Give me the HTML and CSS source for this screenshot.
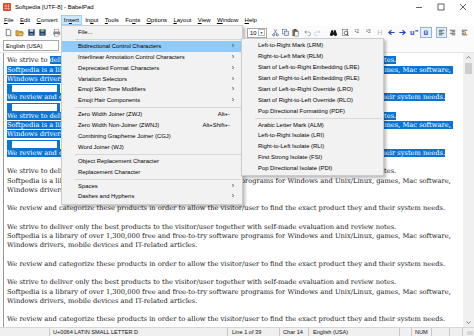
FILE: index.html
```html
<!DOCTYPE html>
<html lang="en">
<head>
  <meta charset="UTF-8" />
  <title>Softpedia [UTF-8] - BabelPad</title>
  <link rel="stylesheet" href="styles.css">
</head>
<body>
<div class="window">

  <div class="titlebar">
    <svg class="app-icon" viewBox="0 0 8 8"><rect x="0" y="0" width="8" height="8" rx="1" fill="#d9482a"/><path d="M1 3h6M1 5.5h6M3 1v6M5.5 1v6" stroke="#f6c4b4" stroke-width="0.6"/></svg>
    <span class="title">Softpedia [UTF-8] - BabelPad</span>
    <div class="win-controls">
      <svg viewBox="0 0 22 14"><path d="M8 7.5h6" stroke="#222" stroke-width="0.7"/></svg>
      <svg viewBox="0 0 22 14"><rect x="8" y="4" width="6" height="6" fill="none" stroke="#222" stroke-width="0.7"/></svg>
      <svg viewBox="0 0 22 14"><path d="M8 4l6 6M14 4l-6 6" stroke="#222" stroke-width="0.7"/></svg>
    </div>
  </div>

  <div class="menubar">
    <span class="menu-item"><u>F</u>ile</span>
    <span class="menu-item"><u>E</u>dit</span>
    <span class="menu-item"><u>C</u>onvert</span>
    <span class="menu-item open">In<u>s</u>ert</span>
    <span class="menu-item">In<u>p</u>ut</span>
    <span class="menu-item"><u>T</u>ools</span>
    <span class="menu-item">Fo<u>n</u>ts</span>
    <span class="menu-item"><u>O</u>ptions</span>
    <span class="menu-item"><u>L</u>ayout</span>
    <span class="menu-item"><u>V</u>iew</span>
    <span class="menu-item"><u>W</u>indow</span>
    <span class="menu-item"><u>H</u>elp</span>
  </div>

  <div class="toolbar">
    <div class="tb-group">
      <span class="tb-btn"><svg viewBox="0 0 10 10"><path d="M2.5 1.5h3.5l1.5 1.5v5.5h-5z" fill="#fff" stroke="#333" stroke-width="0.7"/></svg></span>
      <span class="tb-btn"><svg viewBox="0 0 10 10"><path d="M1 3h3l1 1h3.5v4.5H1z" fill="#e3b341" stroke="#7a5a12" stroke-width="0.6"/><path d="M2.5 8.5l1.5-3h5.5l-1.5 3z" fill="#f5d271" stroke="#7a5a12" stroke-width="0.5"/></svg></span>
      <span class="tb-btn"><svg viewBox="0 0 10 10"><rect x="1.5" y="1.5" width="7" height="7" fill="#1d3866"/><rect x="3" y="1.5" width="4" height="2.6" fill="#dfe6ee"/><rect x="3" y="5.6" width="4" height="2.9" fill="#6b7f9e"/></svg></span>
      <span class="tb-btn"><svg viewBox="0 0 10 10"><rect x="1.5" y="1.5" width="7" height="7" fill="#22406e"/><rect x="3" y="1.5" width="4" height="2.6" fill="#8fc26a"/><rect x="3" y="5.6" width="4" height="2.9" fill="#5d7390"/></svg></span>
      <span class="tb-sep"></span>
      <span class="tb-btn"><svg viewBox="0 0 10 10"><rect x="3" y="1.5" width="4.5" height="3" fill="#fff" stroke="#666" stroke-width="0.5"/><rect x="1.5" y="4" width="7.5" height="3.5" fill="#8a8a8a"/><rect x="3" y="6.5" width="4.5" height="2.5" fill="#fff" stroke="#666" stroke-width="0.5"/></svg></span>
    </div>
    <div class="tb-hidden"></div>
    <div class="tb-group">
      <div class="combo size-combo"><span>10</span><span class="combo-arrow"><svg viewBox="0 0 6 8"><path d="M1.5 3.2h3L3 5z" fill="#222"/></svg></span></div>
      <span class="tb-btn narrow"><svg viewBox="0 0 10 10"><path d="M3.5 6.5L6.5 1.5M6.5 6.5L3.5 1.5" stroke="#4a5a70" stroke-width="0.7"/><circle cx="3" cy="7.6" r="1.2" fill="none" stroke="#1f3c78" stroke-width="0.7"/><circle cx="7" cy="7.6" r="1.2" fill="none" stroke="#1f3c78" stroke-width="0.7"/></svg></span>
      <span class="tb-btn narrow"><svg viewBox="0 0 10 10"><rect x="1.5" y="1.5" width="4.5" height="5" fill="#fff" stroke="#3a5a8a" stroke-width="0.6"/><rect x="4" y="3.5" width="4.5" height="5" fill="#dbe6f3" stroke="#3a5a8a" stroke-width="0.6"/></svg></span>
      <span class="tb-btn narrow"><svg viewBox="0 0 10 10"><rect x="1.5" y="2" width="6" height="7" fill="#8a6a3a"/><rect x="3" y="1.2" width="3" height="1.6" fill="#444"/><rect x="4.2" y="4" width="4.3" height="5" fill="#eef2f7" stroke="#3a5a8a" stroke-width="0.5"/></svg></span>
      <span class="tb-sep"></span>
      <span class="tb-btn narrow"><svg viewBox="0 0 10 10"><path d="M3 4.5h3.5a2 2 0 0 1 0 4H5" fill="none" stroke="#7f98b8" stroke-width="0.8"/><path d="M1.5 4.5l2-2v4z" fill="#7f98b8"/></svg></span>
      <span class="tb-btn narrow"><svg viewBox="0 0 10 10"><path d="M7 4.5H3.5a2 2 0 0 0 0 4H5" fill="none" stroke="#c2ccd8" stroke-width="0.8"/><path d="M8.5 4.5l-2-2v4z" fill="#c2ccd8"/></svg></span>
      <span class="tb-sep wide"></span>
      <span class="tb-btn"><svg viewBox="0 0 10 10"><path d="M1.2 7.5L2.5 2.5h2L4.8 5h0.4L5.5 2.5h2l1.3 5z" fill="#1a1a1a"/><circle cx="2.8" cy="7.2" r="1.7" fill="#1a1a1a"/><circle cx="7.2" cy="7.2" r="1.7" fill="#1a1a1a"/></svg></span>
      <span class="tb-btn"><svg viewBox="0 0 10 10"><rect x="1.5" y="1.5" width="6" height="7" fill="#fff" stroke="#555" stroke-width="0.6"/><circle cx="5.5" cy="5.5" r="2" fill="none" stroke="#333" stroke-width="0.7"/><path d="M6.8 6.8l1.8 1.8" stroke="#333" stroke-width="0.8"/></svg></span>
      <span class="tb-btn frac">&#185;<sub>2</sub></span>
      <span class="tb-btn frac">&#185;<sub>3</sub></span>
      <span class="tb-btn letter-h">H</span>
      <span class="tb-btn"><svg viewBox="0 0 10 10"><path d="M8.5 5H3M5 2.5L2 5l3 2.5" fill="none" stroke="#1f48c0" stroke-width="1.2"/></svg></span>
      <span class="tb-btn"><svg viewBox="0 0 10 10"><path d="M1.5 5H7M5 2.5L8 5 5 7.5" fill="none" stroke="#1f48c0" stroke-width="1.2"/></svg></span>
      <span class="tb-btn glyph">u&#8221;</span>
      <span class="tb-btn glyph pressed">&#252;</span>
      <span class="tb-sep small"></span>
      <span class="tb-btn pressed"><svg viewBox="0 0 10 10"><path d="M2 2.5h6M2 4.2h4M2 5.9h6M2 7.6h4" stroke="#333" stroke-width="0.8"/></svg></span>
      <span class="tb-btn"><svg viewBox="0 0 10 10"><path d="M2 2.5h6M4 4.2h4M2 5.9h6M4 7.6h4" stroke="#333" stroke-width="0.8"/></svg></span>
      <span class="tb-btn"><svg viewBox="0 0 10 10"><path d="M2 2.5h6M2 4.2h3M2 5.9h3M2 7.6h6" stroke="#333" stroke-width="0.8"/><path d="M6 4v3" stroke="#c47a12" stroke-width="0.9"/></svg></span>
    </div>
  </div>

  <div class="toolbar lang-bar">
    <div class="combo lang-combo">English (USA)</div>
  </div>

  <div class="workspace">
    <div class="editor">
      <div class="ln">We strive to <span class="sel">deliver only the best products to the visitor/user together with self-made evaluation and review notes.</span></div>
      <div class="ln"><span class="sel">Softpedia is a library of over 1,300,000 free and free-to-try software programs for Windows and Unix/Linux, games, Mac software, </span></div>
      <div class="ln"><span class="sel">Windows drivers, mobile devices and IT-related articles.</span></div>
      <div class="ln"><span class="nl"></span></div>
      <div class="ln"><span class="sel">We review and categorize these products in order to allow the visitor/user to find the exact product they and their system needs.</span></div>
      <div class="ln"><span class="nl"></span></div>
      <div class="ln"><span class="sel">We strive to deliver only the best products to the visitor/user together with self-made evaluation and review notes.</span></div>
      <div class="ln"><span class="sel">Softpedia is a library of over 1,300,000 free and free-to-try software programs for Windows and Unix/Linux, games, Mac software, </span></div>
      <div class="ln"><span class="sel">Windows drivers, mobile devices and IT-related articles.</span></div>
      <div class="ln"><span class="nl"></span></div>
      <div class="ln"><span class="sel">We review and categorize these products in order to allow the visitor/user to find the exact product they and their system needs.</span></div>
      <div class="ln"></div>
      <div class="ln">We strive to deliver only the best products to the visitor/user together with self-made evaluation and review notes.</div>
      <div class="ln">Softpedia is a library of over 1,300,000 free and free-to-try software programs for Windows and Unix/Linux, games, Mac software,</div>
      <div class="ln">Windows drivers, mobile devices and IT-related articles.</div>
      <div class="ln"></div>
      <div class="ln">We review and categorize these products in order to allow the visitor/user to find the exact product they and their system needs.</div>
      <div class="ln"></div>
      <div class="ln">We strive to deliver only the best products to the visitor/user together with self-made evaluation and review notes.</div>
      <div class="ln">Softpedia is a library of over 1,300,000 free and free-to-try software programs for Windows and Unix/Linux, games, Mac software,</div>
      <div class="ln">Windows drivers, mobile devices and IT-related articles.</div>
      <div class="ln"></div>
      <div class="ln">We review and categorize these products in order to allow the visitor/user to find the exact product they and their system needs.</div>
      <div class="ln"></div>
      <div class="ln">We strive to deliver only the best products to the visitor/user together with self-made evaluation and review notes.</div>
      <div class="ln">Softpedia is a library of over 1,300,000 free and free-to-try software programs for Windows and Unix/Linux, games, Mac software,</div>
      <div class="ln">Windows drivers, mobile devices and IT-related articles.</div>
      <div class="ln"></div>
      <div class="ln">We review and categorize these products in order to allow the visitor/user to find the exact product they and their system needs.</div>
    </div>
    <div class="vscroll">
      <svg class="sb-arrow" viewBox="0 0 11 9"><path d="M3.5 5.5l2-2 2 2" fill="none" stroke="#606060" stroke-width="0.8"/></svg>
      <div class="sb-thumb"></div>
      <div class="sb-track"></div>
      <svg class="sb-arrow" viewBox="0 0 11 9"><path d="M3.5 3.5l2 2 2-2" fill="none" stroke="#606060" stroke-width="0.8"/></svg>
    </div>
  </div>

  <div class="statusbar">
    <div class="panel p-first"></div>
    <div class="panel p-char">U+0064 LATIN SMALL LETTER D</div>
    <div class="panel p-line">Line 1 of 39</div>
    <div class="panel p-col">Char 14</div>
    <div class="panel p-lang">English (USA)</div>
    <div class="panel p-e1"></div>
    <div class="panel p-num">NUM</div>
    <div class="panel p-e2"></div>
    <div class="panel p-e3"></div>
    <div class="grip"></div>
  </div>

  <!-- Insert menu (open) -->
  <div class="menu insert-menu">
    <div class="mi">File...</div>
    <div class="msep"></div>
    <div class="mi hl">Bidirectional Control Characters<span class="arrow">&#8250;</span></div>
    <div class="mi">Interlinear Annotation Control Characters<span class="arrow">&#8250;</span></div>
    <div class="mi">Deprecated Format Characters<span class="arrow">&#8250;</span></div>
    <div class="mi">Variation Selectors<span class="arrow">&#8250;</span></div>
    <div class="mi">Emoji Skin Tone Modifiers<span class="arrow">&#8250;</span></div>
    <div class="mi">Emoji Hair Components<span class="arrow">&#8250;</span></div>
    <div class="msep"></div>
    <div class="mi">Zero Width Joiner (ZWJ)<span class="key">Alt+-</span></div>
    <div class="mi">Zero Width Non-Joiner (ZWNJ)<span class="key">Alt+Shift+-</span></div>
    <div class="mi">Combining Grapheme Joiner (CGJ)</div>
    <div class="mi">Word Joiner (WJ)</div>
    <div class="msep"></div>
    <div class="mi">Object Replacement Character</div>
    <div class="mi">Replacement Character</div>
    <div class="msep"></div>
    <div class="mi">Spaces<span class="arrow">&#8250;</span></div>
    <div class="mi">Dashes and Hyphens<span class="arrow">&#8250;</span></div>
  </div>

  <!-- Bidirectional submenu -->
  <div class="menu bidi-menu">
    <div class="mi">Left-to-Right Mark (LRM)</div>
    <div class="mi">Right-to-Left Mark (RLM)</div>
    <div class="mi">Start of Left-to-Right Embedding (LRE)</div>
    <div class="mi">Start of Right-to-Left Embedding (RLE)</div>
    <div class="mi">Start of Left-to-Right Override (LRO)</div>
    <div class="mi">Start of Right-to-Left Override (RLO)</div>
    <div class="mi">Pop Directional Formatting (PDF)</div>
    <div class="msep"></div>
    <div class="mi">Arabic Letter Mark (ALM)</div>
    <div class="mi">Left-to-Right Isolate (LRI)</div>
    <div class="mi">Right-to-Left Isolate (RLI)</div>
    <div class="mi">First Strong Isolate (FSI)</div>
    <div class="mi">Pop Directional Isolate (PDI)</div>
  </div>

</div>
</body>
</html>
```

FILE: styles.css
```css
* {
box-sizing: border-box;
}

body {
margin: 0;
}

.window {
position: relative;
width: 474px;
height: 336px;
overflow: hidden;
display: flex;
flex-direction: column;
background: #fff;
font-family: "Liberation Sans", Arial, sans-serif;
font-size: 6px;
color: #000;
}

/* title bar */
.titlebar {
height: 14px;
flex-shrink: 0;
display: flex;
align-items: center;
padding-left: 3px;
}

.app-icon {
width: 8px;
height: 8px;
margin-right: 4px;
}

.win-controls {
margin-left: auto;
display: flex;
}

.win-controls svg {
width: 22px;
height: 14px;
display: block;
}

/* menu bar */
.menubar {
height: 12px;
flex-shrink: 0;
display: flex;
align-items: center;
padding-left: 0.8px;
}

.menu-item {
padding: 0 3.15px;
line-height: 10px;
}

.menu-item.open {
background: #cce8ff;
box-shadow: inset 0 0 0 1px #99d1ff;
}

/* toolbars */
.toolbar {
height: 13px;
flex-shrink: 0;
display: flex;
align-items: center;
background: #fbfbfb;
padding: 0 4px 0 2.5px;
}

.tb-group {
display: flex;
align-items: center;
}

.tb-hidden {
flex: 1;
}

.tb-btn {
width: 11.5px;
height: 11px;
display: flex;
align-items: center;
justify-content: center;
}

.tb-btn.narrow {
width: 10px;
}

.tb-btn svg {
width: 9px;
height: 9px;
}

.tb-sep {
width: 2px;
height: 10px;
}

.tb-sep.wide {
width: 6px;
}

.tb-sep.small {
width: 4px;
}

.tb-btn.pressed {
background: #e3eef9;
box-shadow: inset 0 0 0 1px #8fb5de;
}

.tb-btn.frac {
font-size: 5.5px;
color: #555;
align-items: flex-start;
padding-top: 1px;
}

.tb-btn.frac sub {
font-size: 5px;
vertical-align: -3px;
}

.tb-btn.letter-h {
font-size: 7px;
color: #b8b8b8;
}

.tb-btn.glyph {
font-size: 7.5px;
font-weight: bold;
color: #1f48c0;
}

.combo {
height: 10px;
border: 1px solid #a9a9a9;
background: #fff;
display: flex;
align-items: center;
padding-left: 2px;
font-size: 5.8px;
}

.size-combo {
width: 20px;
margin-right: 3px;
justify-content: space-between;
padding-right: 1px;
}

.combo-arrow {
width: 7px;
height: 7px;
border: 1px solid #bbb;
display: flex;
align-items: center;
justify-content: center;
}

.combo-arrow svg {
width: 6px;
height: 8px;
}

.lang-bar {
height: 14px;
border-bottom: 1px solid #e3e3e3;
padding-left: 3px;
}

.lang-combo {
width: 56px;
height: 11px;
}

/* editor */
.workspace {
flex: 1;
display: flex;
min-height: 0;
background: #fbfbfb;
padding-left: 3px;
}

.editor {
flex: 1;
background: #fff;
border-left: 1px solid #9a9a9a;
padding: 3.4px 0 0 3px;
overflow: hidden;
font-family: "DejaVu Serif", "Liberation Serif", serif;
font-size: 6.7px;
color: #1a1a1a;
}

.ln {
height: 9.25px;
line-height: 9.25px;
white-space: pre;
}

.sel {
background: #0a74d4;
color: #fff;
}

.nl {
display: inline-block;
vertical-align: top;
width: 53px;
height: 9.25px;
background: #fff;
border: solid #0a74d4;
border-width: 1px 3px 1px 5px;
}

.vscroll {
width: 11px;
background: #f0f0f0;
display: flex;
flex-direction: column;
align-items: center;
}

.sb-arrow {
width: 11px;
height: 9px;
flex-shrink: 0;
}

.sb-thumb {
width: 7px;
height: 11px;
background: #cdcdcd;
margin-top: 1px;
}

.sb-track {
flex: 1;
}

/* status bar */
.statusbar {
height: 9px;
flex-shrink: 0;
display: flex;
background: #f0f0f0;
border-top: 1px solid #d7d7d7;
font-size: 5.6px;
line-height: 8px;
color: #111;
}

.panel {
border-right: 1px solid #c9c9c9;
padding-left: 3px;
white-space: nowrap;
}

.p-first { width: 50px; }
.p-char { width: 178px; }
.p-line { width: 52px; padding-left: 4px; }
.p-col { width: 29px; }
.p-lang { width: 91px; padding-left: 4px; }
.p-e1 { width: 12px; }
.p-num { width: 20px; }
.p-e2 { width: 18px; }
.p-e3 { width: 13px; }

.grip {
flex: 1;
background: radial-gradient(circle, #a0a0a0 0.5px, transparent 0.8px) 0 0 / 2px 2px;
margin: 3px 1px 1px 4px;
}

/* drop-down menus */
.menu {
position: absolute;
background: #f2f2f2;
border: 1px solid #cccccc;
box-shadow: 2px 2px 3px rgba(0, 0, 0, 0.28);
padding: 1.3px 0;
font-size: 5.9px;
color: #000;
}

.insert-menu {
left: 61px;
top: 24.7px;
width: 182px;
}

.bidi-menu {
left: 241px;
top: 38px;
width: 143px;
}

.mi {
height: 10.9px;
line-height: 10.9px;
padding: 0 8px 0 16px;
display: flex;
justify-content: space-between;
white-space: nowrap;
}

.mi.hl {
background: #91c9f7;
}

.mi .arrow {
font-size: 7px;
color: #333;
}

.mi .key {
padding-right: 4px;
}

.msep {
height: 3px;
margin: 0 1px 0 13px;
position: relative;
}

.msep::after {
content: "";
position: absolute;
left: 0;
right: 0;
top: 1px;
border-top: 1px solid #d7d7d7;
}
```
